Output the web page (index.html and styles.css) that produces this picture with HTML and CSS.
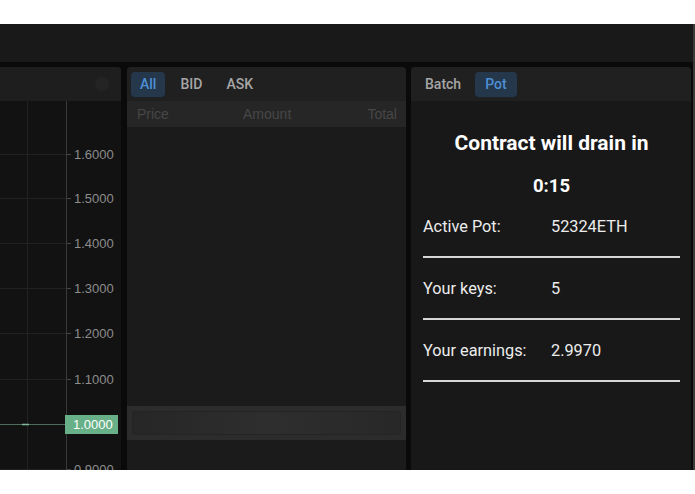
FILE: index.html
```html
<!DOCTYPE html>
<html lang="en">
<head>
  <meta charset="UTF-8">
  <meta name="viewport" content="width=device-width, initial-scale=1.0">
  <title>Pot</title>
  <link rel="stylesheet" href="styles.css">
</head>
<body>
  <div class="app">
    <div class="topbar"></div>

    <div class="panels">
      <!-- chart -->
      <div class="panel chart-panel">
        <div class="panel-head chart-head">
          <span class="head-dot"></span>
        </div>
        <div class="chart-body">
          <svg width="121" height="369" viewBox="0 0 121 369">
            <g stroke="#222" stroke-width="1">
              <line x1="0" y1="53.5" x2="66" y2="53.5"/>
              <line x1="0" y1="97.5" x2="66" y2="97.5"/>
              <line x1="0" y1="142.5" x2="66" y2="142.5"/>
              <line x1="0" y1="187.5" x2="66" y2="187.5"/>
              <line x1="0" y1="232.5" x2="66" y2="232.5"/>
              <line x1="0" y1="278.5" x2="66" y2="278.5"/>
              <line x1="0" y1="368.5" x2="66" y2="368.5"/>
              <line x1="27.5" y1="0" x2="27.5" y2="369"/>
            </g>
            <line x1="66.5" y1="0" x2="66.5" y2="369" stroke="#3a3a3a"/>
            <g stroke="#444">
              <line x1="67" y1="53.5" x2="71" y2="53.5"/>
              <line x1="67" y1="97.5" x2="71" y2="97.5"/>
              <line x1="67" y1="142.5" x2="71" y2="142.5"/>
              <line x1="67" y1="187.5" x2="71" y2="187.5"/>
              <line x1="67" y1="232.5" x2="71" y2="232.5"/>
              <line x1="67" y1="278.5" x2="71" y2="278.5"/>
              <line x1="67" y1="368.5" x2="71" y2="368.5"/>
            </g>
            <line x1="0" y1="323.5" x2="66" y2="323.5" stroke="#4f6d5d"/>
            <line x1="22" y1="323.5" x2="29" y2="323.5" stroke="#7fb89a" stroke-width="1.5"/>
            <g class="axis-label" fill="#8c8c8c">
              <text x="74" y="58">1.6000</text>
              <text x="74" y="102">1.5000</text>
              <text x="74" y="147">1.4000</text>
              <text x="74" y="192">1.3000</text>
              <text x="74" y="237">1.2000</text>
              <text x="74" y="283">1.1000</text>
              <text x="74" y="373">0.9000</text>
            </g>
            <rect x="65" y="314" width="53" height="19" fill="#67b088"/>
            <text class="axis-label" x="73" y="328" fill="#ffffff">1.0000</text>
          </svg>
        </div>
      </div>

      <!-- order book -->
      <div class="panel book-panel">
        <div class="panel-head">
          <span class="tab active">All</span>
          <span class="tab">BID</span>
          <span class="tab">ASK</span>
        </div>
        <div class="book-cols">
          <span>Price</span>
          <span class="col-mid">Amount</span>
          <span class="col-right">Total</span>
        </div>
        <div class="book-body"></div>
        <div class="book-input">
          <div class="input-field"></div>
        </div>
        <div class="book-foot"></div>
      </div>

      <!-- pot -->
      <div class="panel pot-panel">
        <div class="panel-head">
          <span class="tab">Batch</span>
          <span class="tab active">Pot</span>
        </div>
        <div class="pot-body">
          <div class="pot-title">Contract will drain in</div>
          <div class="pot-timer">0:15</div>
          <div class="stat-row">
            <span class="stat-label">Active Pot:</span>
            <span class="stat-value">52324ETH</span>
          </div>
          <div class="stat-row">
            <span class="stat-label">Your keys:</span>
            <span class="stat-value">5</span>
          </div>
          <div class="stat-row">
            <span class="stat-label">Your earnings:</span>
            <span class="stat-value">2.9970</span>
          </div>
        </div>
      </div>
    </div>
  </div>
</body>
</html>
```

FILE: styles.css
```css
body {
  margin: 0;
  padding-top: 24px;
  background: #ffffff;
  font-family: Roboto, "Liberation Sans", sans-serif;
}
.app {
  width: 693px;
  height: 446px;
  overflow: hidden;
  background: #0a0a0a;
  border-right: 2px solid #3a3a3a;
  display: flex;
  flex-direction: column;
}
.topbar {
  height: 38px;
  background: #191919;
  flex-shrink: 0;
}
.panels {
  flex: 1;
  display: grid;
  grid-template-columns: 121px 279px 279px;
  column-gap: 6px;
  padding-top: 5px;
  min-height: 0;
}
.panels .pot-panel {
  margin-left: -1px;
}
.panel {
  display: flex;
  flex-direction: column;
  border-radius: 4px 4px 0 0;
  overflow: hidden;
  background: #1b1b1b;
}
.panel-head {
  height: 34px;
  flex-shrink: 0;
  background: #202020;
  display: flex;
  align-items: center;
  padding: 0 4px;
  gap: 6px;
}
.chart-panel {
  border-radius: 0 4px 0 0;
}
.chart-head {
  background: #1e1e1e;
  justify-content: flex-end;
  padding-right: 12px;
}
.head-dot {
  width: 14px;
  height: 14px;
  border-radius: 50%;
  background: #242424;
}
.chart-body {
  flex: 1;
  background: #121212;
}
.chart-body svg {
  display: block;
}
.axis-label {
  font-family: "Liberation Sans", Arial, sans-serif;
  font-size: 13px;
}
.tab {
  height: 25px;
  line-height: 25px;
  padding: 0 8px;
  border-radius: 4px;
  font-size: 14px;
  font-weight: 500;
  color: #a6a6a6;
}
.tab.active {
  background: #24374b;
  color: #4e8fd6;
}
.book-panel .tab {
  padding: 0 9px;
}
.book-cols {
  height: 26px;
  flex-shrink: 0;
  background: #262626;
  display: flex;
  align-items: center;
  justify-content: space-between;
  padding: 0 9px 0 10px;
  font-family: "Liberation Sans", Arial, sans-serif;
  font-size: 14px;
  color: #474747;
}
.col-mid {
  margin-left: -2px;
}
.book-body {
  flex: 0 0 279px;
  background: #1b1b1b;
}
.book-input {
  flex-shrink: 0;
  height: 34px;
  background: #2c2c2c;
  padding: 5px;
  box-sizing: border-box;
}
.input-field {
  height: 24px;
  border-radius: 4px;
  background: linear-gradient(90deg, #262626, #2e2e2e 50%, #282828);
  box-shadow: inset 0 0 0 1px #242424;
}
.book-foot {
  flex: 1;
  background: #1b1b1b;
}
.pot-panel .panel-head {
  padding: 0 6px;
  gap: 6px;
}
.pot-panel .tab.active {
  padding: 0 10px;
}
.pot-body {
  flex: 1;
  background: #181818;
  padding: 0 11px 0 12px;
  color: #ececec;
}
.pot-title {
  margin-top: 30px;
  line-height: 24px;
  font-size: 21px;
  font-weight: 700;
  text-align: center;
  color: #ffffff;
}
.pot-timer {
  margin-top: 21px;
  line-height: 20px;
  font-size: 18.5px;
  font-weight: 700;
  text-align: center;
  color: #ffffff;
}
.stat-row {
  display: flex;
  padding: 19px 0 17px;
  line-height: 24px;
  font-size: 16.3px;
  border-bottom: 2px solid #d6d6d6;
}
.stat-label {
  width: 128px;
}
```
